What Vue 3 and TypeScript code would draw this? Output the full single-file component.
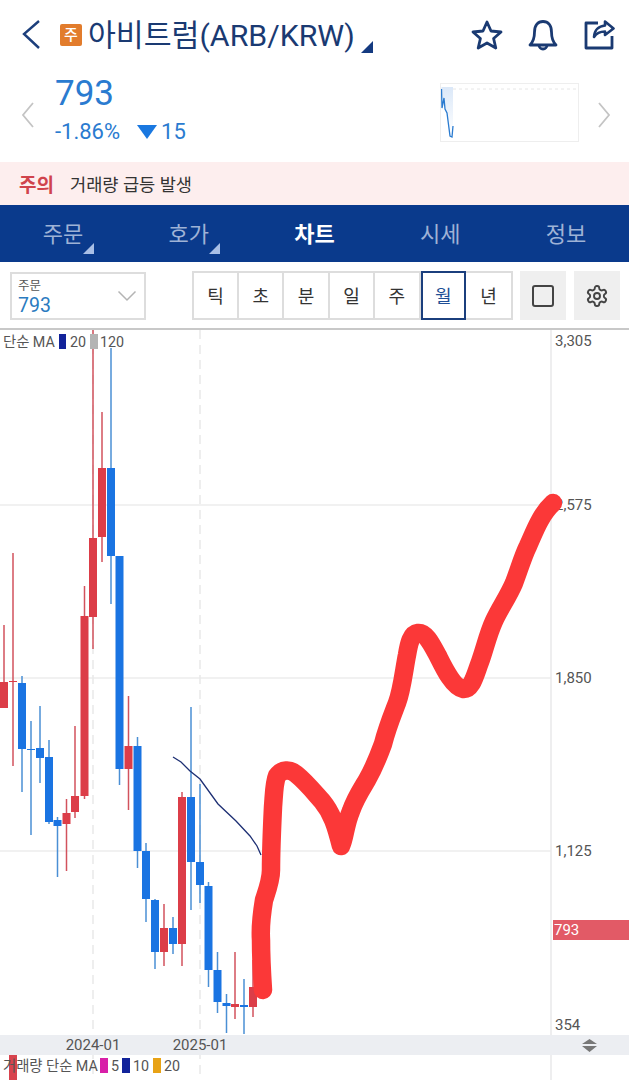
<template>
  <div class="page">
    <header class="top">
      <svg class="back" width="20" height="32" viewBox="0 0 20 32">
        <path d="M18 2 L3 15 L18 29" fill="none" stroke="#1c3f7c" stroke-width="2.400" />
      </svg>
      <span class="badge">주</span>
      <h1 class="title">아비트럼(ARB/KRW)</h1>
      <span class="title-tri"></span>
      <div class="top-icons">
        <svg width="32" height="32" viewBox="0 0 32 32">
          <path
            d="M16 3 L20 12 L30 13 L22.600 19.500 L24.800 29 L16 24 L7.200 29 L9.400 19.500 L2 13 L12 12 Z"
            fill="none"
            stroke="#1a3a72"
            stroke-width="2.800"
            stroke-linejoin="round"
          />
        </svg>
        <svg width="32" height="32" viewBox="0 0 32 32">
          <path
            d="M3 26 C7 22 7.500 18 7.500 13 C7.500 6 11 2.500 16 2.500 C21 2.500 24.500 6 24.500 13 C24.500 18 25 22 29 26 Z"
            fill="none"
            stroke="#1a3a72"
            stroke-width="2.800"
            stroke-linejoin="round"
          />
          <path d="M12 26 a4 4 0 0 0 8 0" fill="none" stroke="#1a3a72" stroke-width="2.800" />
        </svg>
        <svg width="32" height="32" viewBox="0 0 32 32">
          <path
            d="M15 4 H3 V29 H29 V17"
            fill="none"
            stroke="#1a3a72"
            stroke-width="2.800"
            stroke-linejoin="round"
          />
          <path
            d="M22 2.500 L30.500 9.500 L22 16 V12.500 C17 12.500 13.500 14 11 18 C11.500 11.500 15.500 7 22 6.500 Z"
            fill="none"
            stroke="#1a3a72"
            stroke-width="2.600"
            stroke-linejoin="round"
          />
        </svg>
      </div>
    </header>

    <section class="price-row">
      <svg class="side-arrow" width="14" height="28" viewBox="0 0 14 28">
        <path d="M12 2 L2 14 L12 26" fill="none" stroke="#c4c4c4" stroke-width="1.800" />
      </svg>
      <div class="price-box">
        <div class="price">793</div>
        <div class="change">
          <span>-1.86%</span>
          <span class="down-tri"></span>
          <span class="diff">15</span>
        </div>
      </div>
      <div class="spark">
        <svg width="138" height="58" viewBox="0 0 138 58">
          <defs>
            <linearGradient id="sparkFill" x1="0" y1="0" x2="0" y2="1">
              <stop offset="0" stop-color="#dbe8f8" />
              <stop offset="1" stop-color="#ffffff" />
            </linearGradient>
          </defs>
          <line x1="0" y1="5" x2="138" y2="5" stroke="#e6e6e6" stroke-dasharray="3 3" />
          <path d="M0.500 3 L1 24 L3 14 L4 25 L6 29 L9 52 L11 53 L12 42 V3 Z" fill="url(#sparkFill)" />
          <path d="M0.500 5 L1 24 L3 14 L4 25 L6 29 L9 52 L11 53 L12 42" fill="none" stroke="#2a7bd0" stroke-width="1.300" />
        </svg>
      </div>
      <svg class="side-arrow" width="14" height="28" viewBox="0 0 14 28">
        <path d="M2 2 L12 14 L2 26" fill="none" stroke="#c4c4c4" stroke-width="1.800" />
      </svg>
    </section>

    <div class="notice">
      <strong>주의</strong>
      <span>거래량 급등 발생</span>
    </div>

    <nav class="tabs">
      <div v-for="t in tabs" :key="t.label" class="tab" :class="{ active: t.active }">
        {{ t.label }}
        <span v-if="t.more" class="tab-tri"></span>
      </div>
    </nav>

    <div class="toolbar">
      <div class="select">
        <div class="select-text">
          <div class="select-label">주문</div>
          <div class="select-value">793</div>
        </div>
        <svg width="20" height="12" viewBox="0 0 20 12">
          <path d="M1.500 1.500 L10 10 L18.500 1.500" fill="none" stroke="#b4b4b4" stroke-width="1.500" />
        </svg>
      </div>
      <div class="periods">
        <div v-for="p in periods" :key="p" class="period" :class="{ on: p === '월' }">{{ p }}</div>
      </div>
      <div class="tool-btn">
        <svg width="24" height="24" viewBox="0 0 24 24">
          <rect x="2" y="2" width="20" height="20" rx="2" fill="none" stroke="#444" stroke-width="2" />
        </svg>
      </div>
      <div class="tool-btn gear">
        <svg width="24" height="24" viewBox="0 0 24 24" fill="none" stroke="#444" stroke-width="1.900">
          <path
            d="M12.220 2h-.44a2 2 0 0 0-2 2v.18a2 2 0 0 1-1 1.730l-.43.25a2 2 0 0 1-2 0l-.15-.08a2 2 0 0 0-2.730.73l-.22.38a2 2 0 0 0 .73 2.730l.15.1a2 2 0 0 1 1 1.720v.51a2 2 0 0 1-1 1.740l-.15.09a2 2 0 0 0-.73 2.730l.22.38a2 2 0 0 0 2.730.73l.15-.08a2 2 0 0 1 2 0l.43.25a2 2 0 0 1 1 1.730V20a2 2 0 0 0 2 2h.44a2 2 0 0 0 2-2v-.18a2 2 0 0 1 1-1.730l.43-.25a2 2 0 0 1 2 0l.15.08a2 2 0 0 0 2.730-.73l.22-.39a2 2 0 0 0-.73-2.730l-.15-.08a2 2 0 0 1-1-1.740v-.5a2 2 0 0 1 1-1.740l.15-.09a2 2 0 0 0 .73-2.730l-.22-.38a2 2 0 0 0-2.730-.73l-.15.08a2 2 0 0 1-2 0l-.43-.25a2 2 0 0 1-1-1.730V4a2 2 0 0 0-2-2z"
          />
          <circle cx="12" cy="12" r="3" />
        </svg>
      </div>
    </div>

    <div class="chart">
      <svg width="629" height="750" viewBox="0 330 629 750">
        <!-- grid -->
        <line v-for="y in [505, 678, 851]" :key="y" x1="0" :y1="y" x2="551" :y2="y" stroke="#ececec" stroke-width="1.500" />
        <line v-for="x in [93, 200]" :key="x" :x1="x" y1="330" :x2="x" y2="1080" stroke="#e9e9e9" stroke-width="1.500" stroke-dasharray="9 6" />
        <line x1="551" y1="330" x2="551" y2="1080" stroke="#e8e8ea" stroke-width="1.500" />

        <!-- candles -->
        <g v-for="(c, i) in candles" :key="i">
          <line :x1="c.x" :y1="c.hi" :x2="c.x" :y2="c.lo" :stroke="c.up ? '#d2525d' : '#4a8fd4'" stroke-width="1.500" />
          <rect :x="c.x - 4" :y="c.top" width="8" :height="c.bot - c.top" :fill="c.up ? '#dc3d48' : '#1a74e2'" />
        </g>

        <!-- MA 20 -->
        <path
          d="M173 757 L181 762 L190 771 L200 779 L218 804 L236 821 L250 836 L257 846 L261 855"
          fill="none"
          stroke="#1d2f73"
          stroke-width="1.300"
        />

        <!-- bottom axis -->
        <rect x="0" y="1035" width="629" height="20" fill="#eceef2" />
        <rect x="9" y="1055" width="8" height="25" fill="#d8434e" />
        <text v-for="d in dates" :key="d.x" class="lbl axis" :x="d.x" y="1050" text-anchor="middle">{{ d.t }}</text>
        <path d="M589.500 1039 L597 1044 H582 Z M589.500 1052 L597 1046 H582 Z" fill="#777" />

        <!-- price axis -->
        <text v-for="p in prices" :key="p.t" class="lbl axis" x="555" :y="p.y">{{ p.t }}</text>
        <rect x="553" y="920" width="76" height="20" fill="#e25a66" />
        <text class="lbl axis cur" x="554" y="935">793</text>

        <!-- legends -->
        <text class="lbl" x="3" y="347">단순 MA</text>
        <rect x="59" y="334" width="7" height="15" fill="#12239a" />
        <text class="lbl" x="70" y="347">20</text>
        <rect x="90" y="334" width="8" height="15" fill="#b4b4b4" />
        <text class="lbl" x="100" y="347">120</text>

        <text class="lbl" x="3" y="1071">거래량 단순 MA</text>
        <rect x="100" y="1058" width="8" height="15" fill="#d81fa8" />
        <text class="lbl" x="111" y="1071">5</text>
        <rect x="122" y="1058" width="8" height="15" fill="#12239a" />
        <text class="lbl" x="133" y="1071">10</text>
        <rect x="153" y="1058" width="8" height="15" fill="#e8a215" />
        <text class="lbl" x="164" y="1071">20</text>

        <!-- hand drawn line -->
        <path
          :d="scribble"
          fill="none"
          stroke="#fb3838"
          stroke-width="18.500"
          stroke-linecap="round"
          stroke-linejoin="round"
        />
      </svg>
    </div>
  </div>
</template>

<script setup lang="ts">
const tabs = [
  { label: '주문', more: true },
  { label: '호가', more: true },
  { label: '차트', active: true },
  { label: '시세' },
  { label: '정보' },
]

const periods = ['틱', '초', '분', '일', '주', '월', '년']

const prices = [
  { t: '3,305', y: 346 },
  { t: '2,575', y: 510 },
  { t: '1,850', y: 683 },
  { t: '1,125', y: 856 },
  { t: '354', y: 1030 },
]

const dates = [
  { x: 93, t: '2024-01' },
  { x: 200, t: '2025-01' },
]

// x, high, low, body top, body bottom, rising
const raw: [number, number, number, number, number, boolean][] = [
  [4, 625, 708, 682, 708, true],
  [13, 553, 766, 681, 682, true],
  [22, 676, 792, 683, 749, false],
  [31, 721, 835, 749, 750, false],
  [40, 706, 783, 748, 758, false],
  [49, 740, 824, 757, 822, false],
  [57.5, 817, 877, 820, 826, false],
  [66.5, 799, 871, 813, 824, true],
  [75, 726, 818, 796, 812, true],
  [84.5, 586, 799, 616, 796, true],
  [93, 330, 649, 538, 617, true],
  [102, 412, 562, 468, 537, true],
  [111, 348, 604, 468, 556, false],
  [119.5, 556, 785, 556, 769, false],
  [128.5, 696, 810, 746, 769, true],
  [137.5, 737, 868, 746, 851, false],
  [146, 843, 922, 851, 899, false],
  [155, 899, 969, 900, 952, false],
  [164, 904, 966, 928, 952, true],
  [173, 917, 954, 928, 944, false],
  [182, 792, 966, 797, 944, true],
  [191, 707, 910, 797, 862, false],
  [200, 784, 903, 862, 885, false],
  [208.5, 882, 987, 886, 970, false],
  [217.5, 952, 1013, 970, 1002, false],
  [226.5, 994, 1033, 1003, 1006, false],
  [235, 952, 1019, 1004, 1007, true],
  [244, 979, 1034, 1005, 1007, false],
  [253, 960, 1017, 987, 1007, true],
]

const candles = raw.map(([x, hi, lo, top, bot, up]) => ({ x, hi, lo, top, bot, up }))

const scribble =
  'M263 990 C262 975 261 958 261 940 C260 925 262 912 264 900 C268 888 271 880 271 870 ' +
  'C271 850 272 828 273 807 C274 795 274 783 277 776 C282 769 290 769 296 774 ' +
  'C306 782 314 792 322 801 C332 813 336 826 341 846 C345 838 345 825 351 811 ' +
  'C355 799 361 790 367 780 C375 766 379 755 383 744 C387 728 392 716 397 703 ' +
  'C402 690 404 670 407 655 C409 643 411 634 418 633 C426 632 432 645 438 656 ' +
  'C444 668 453 687 463 689 C472 690 475 675 480 662 C485 648 488 634 494 621 ' +
  'C500 608 508 597 514 583 C519 570 523 556 528 546 C534 533 540 515 553 503'
</script>

<style>
html,
body {
  margin: 0;
  background: #fff;
  overflow: hidden;
}
</style>

<style scoped>
.page {
  width: 629px;
  height: 1080px;
  overflow: hidden;
  background: #fff;
  font-family: Roboto, "Noto Sans CJK KR", sans-serif;
  color: #333;
}

.top {
  height: 70px;
  display: flex;
  align-items: center;
  padding: 0 14px 0 21px;
  box-sizing: border-box;
}

.back {
  margin-right: 19px;
}

.badge {
  width: 22px;
  height: 22px;
  border-radius: 2px;
  background: #e27c2c;
  color: #fff;
  font-size: 15px;
  font-weight: 500;
  line-height: 22px;
  text-align: center;
  margin-right: 6px;
  flex: none;
}

.title {
  margin: 2px 0 0;
  font-size: 30.300px;
  line-height: 40px;
  font-weight: 400;
  color: #1a3a72;
  white-space: nowrap;
}

.title-tri {
  width: 0;
  height: 0;
  margin: 24px 0 0 6px;
  border-left: 12px solid transparent;
  border-bottom: 12px solid #143a80;
}

.top-icons {
  margin-left: auto;
  display: flex;
  gap: 24px;
}

.price-row {
  height: 92px;
  display: flex;
  align-items: center;
  padding: 0 18px 0 21px;
  box-sizing: border-box;
}

.side-arrow {
  margin-bottom: 2px;
}

.price-box {
  margin: 0 0 15px 20px;
  color: #2a7bd0;
}

.price {
  font-size: 35px;
  line-height: 44px;
}

.change {
  display: flex;
  align-items: center;
  font-size: 22px;
  line-height: 28px;
  margin-top: 2px;
}

.down-tri {
  width: 0;
  height: 0;
  margin: 0 4px 0 17px;
  border-left: 10px solid transparent;
  border-right: 10px solid transparent;
  border-top: 14px solid #1a78e0;
}

.spark {
  margin: 0 18px 8px auto;
  width: 139px;
  height: 59px;
  border: 1px solid #eeeeee;
  box-sizing: border-box;
}

.spark svg {
  display: block;
}

.notice {
  height: 43px;
  background: #fdeeee;
  display: flex;
  align-items: center;
  gap: 16px;
  padding-left: 19px;
  font-size: 17.600px;
  color: #333;
}

.notice strong {
  color: #d0434c;
  font-size: 19px;
  font-weight: 700;
}

.tabs {
  height: 57px;
  background: #0a3a8c;
  display: grid;
  grid-template-columns: repeat(5, 1fr);
}

.tab {
  position: relative;
  display: flex;
  align-items: center;
  justify-content: center;
  padding-bottom: 4px;
  font-size: 22px;
  color: #9fb2d6;
}

.tab.active {
  color: #fff;
  font-weight: 700;
}

.tab-tri {
  position: absolute;
  left: 83px;
  top: 38px;
  width: 0;
  height: 0;
  border-left: 11px solid transparent;
  border-bottom: 11px solid #a9bfe6;
}

.toolbar {
  height: 67px;
  display: flex;
  align-items: center;
  padding: 0 9px 0 10px;
  box-sizing: border-box;
}

.select {
  width: 136px;
  height: 48px;
  border: 2px solid #dddddd;
  box-sizing: border-box;
  display: flex;
  align-items: center;
  justify-content: space-between;
  padding: 0 7px 0 6px;
}

.select-text {
  margin-top: 4px;
}

.select-label {
  font-size: 12.500px;
  line-height: 15px;
  color: #555;
}

.select-value {
  font-size: 19.500px;
  line-height: 25px;
  color: #2a7bbf;
}

.periods {
  margin-left: 46px;
  display: grid;
  grid-template-columns: repeat(7, 1fr);
  width: 322px;
  height: 49px;
  border: 2px solid #dddddd;
  box-sizing: border-box;
}

.period {
  display: flex;
  align-items: center;
  justify-content: center;
  padding-bottom: 2px;
  font-size: 18px;
  color: #333;
  border-right: 2px solid #dddddd;
}

.period:last-child {
  border-right: 0;
}

.period.on {
  margin: -2px 0;
  border: 2px solid #1b3f7d;
  color: #1f4f96;
}

.tool-btn {
  margin-left: 7px;
  width: 46px;
  height: 49px;
  background: #efefef;
  display: flex;
  align-items: center;
  justify-content: center;
}

.tool-btn.gear {
  margin-left: 8px;
}

.chart {
  height: 751px;
  border-top: 2px solid #c8c8c8;
  margin-top: -1px;
  box-sizing: border-box;
}

.chart svg {
  display: block;
}

.lbl {
  font-size: 14.300px;
  fill: #555;
  font-family: Roboto, "Noto Sans CJK KR", sans-serif;
}

.lbl.axis {
  font-size: 15px;
}

.lbl.cur {
  fill: #fff;
}
</style>
